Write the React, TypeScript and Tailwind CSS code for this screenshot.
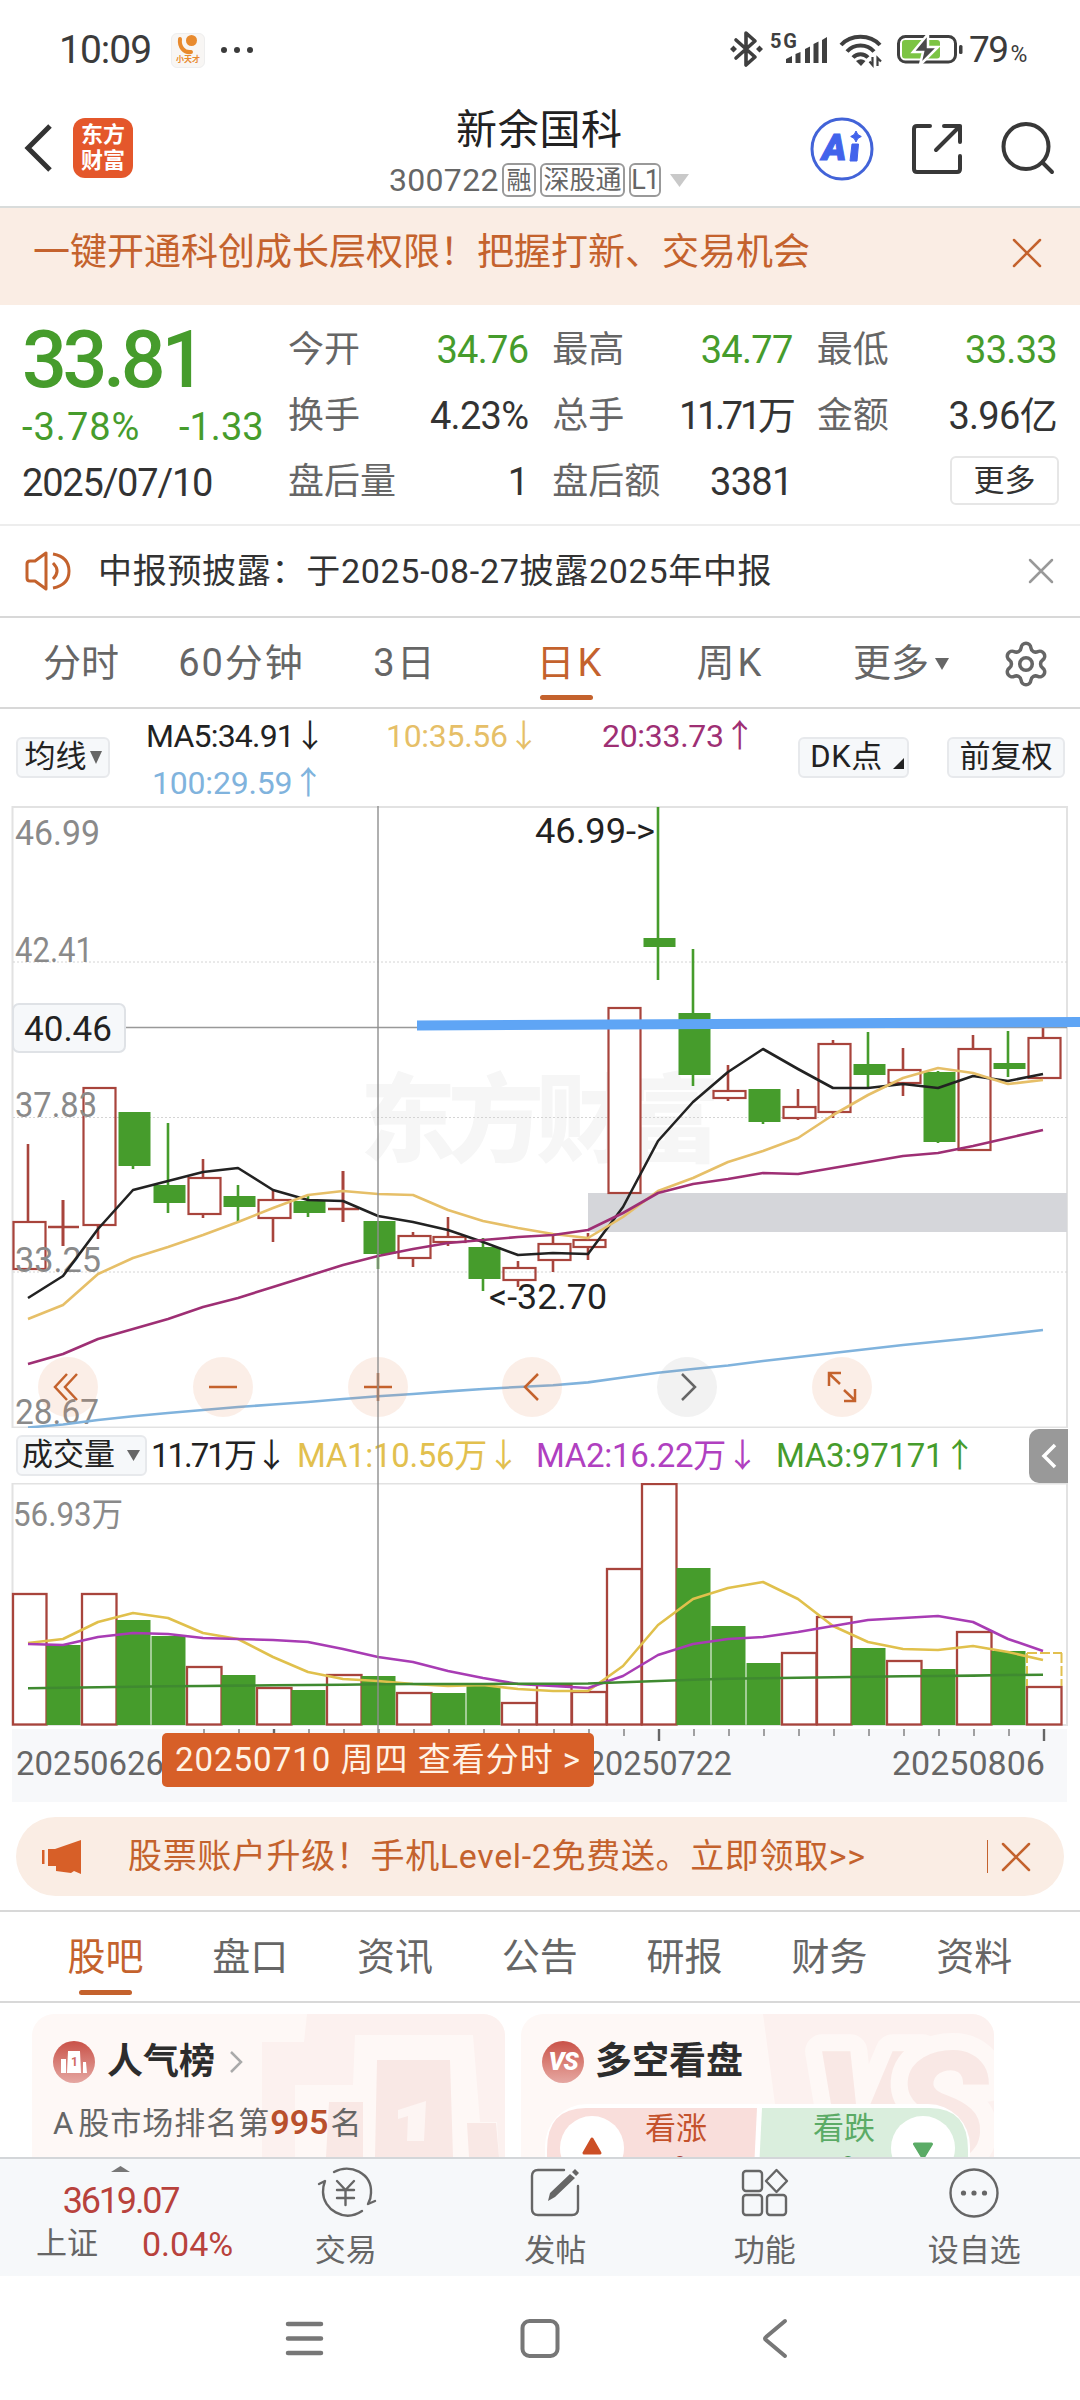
import { Settings } from "lucide-react";
import clsx from "clsx";

const RED = "#a8443c";
const GREEN = "#469c2c";

type Candle = { up: boolean; high: number; top: number; bottom: number; low: number; volume: number };

const c = (up: boolean, high: number, top: number, bottom: number, low: number, volume: number): Candle => ({
  up, high, top, bottom, low, volume,
});

// Chart space: y grows downward, one candle every 35 units starting at x = 28
const candles: Candle[] = [
  c(true, 1144, 1222, 1269, 1269, 1594),
  c(true, 1200, 1227, 1227, 1246, 0),
  c(true, 1087, 1088, 1225, 1239, 1594),
  c(false, 1112, 1112, 1166, 1169, 1620),
  c(false, 1123, 1185, 1203, 1213, 1636),
  c(true, 1159, 1178, 1214, 1218, 1667),
  c(false, 1185, 1196, 1207, 1222, 1675),
  c(true, 1189, 1200, 1218, 1242, 1688),
  c(false, 1195, 1201, 1213, 1217, 1690),
  c(true, 1171, 1209, 1209, 1222, 1675),
  c(false, 1221, 1221, 1254, 1269, 1676),
  c(true, 1232, 1236, 1258, 1267, 1693),
  c(true, 1217, 1237, 1242, 1246, 0),
  c(false, 1238, 1247, 1279, 1291, 1686),
  c(true, 1261, 1268, 1280, 1287, 1703),
  c(true, 1235, 1244, 1260, 1272, 1685),
  c(true, 1233, 1240, 1247, 1260, 1692),
  c(true, 1008, 1008, 1193, 1193, 1569),
  c(false, 807, 938, 947, 980, 0),
  c(false, 949, 1013, 1075, 1086, 1568),
  c(true, 1065, 1091, 1098, 1101, 0),
  c(false, 1089, 1089, 1122, 1124, 1663),
  c(true, 1089, 1107, 1118, 1120, 1653),
  c(true, 1040, 1044, 1112, 1118, 1617),
  c(false, 1032, 1064, 1075, 1088, 1648),
  c(true, 1048, 1070, 1083, 1096, 1661),
  c(false, 1071, 1072, 1142, 1143, 1669),
  c(true, 1035, 1049, 1150, 1150, 1632),
  c(false, 1031, 1063, 1069, 1077, 1651),
  c(true, 1027, 1038, 1078, 1078, 1687),
];

// Days whose volume colour differs from the candle colour
const volumeOverride: Record<number, { up: boolean; y: number }> = {
  1: { up: false, y: 1645 },
  12: { up: false, y: 1693 },
  18: { up: true, y: 1484 },
  20: { up: false, y: 1626 },
};

const ma5 = [1298, 1276, 1229, 1190, 1181, 1172, 1168, 1190, 1200, 1201, 1216, 1222, 1230, 1242, 1255, 1253, 1254, 1207, 1141, 1102, 1072, 1049, 1069, 1088, 1088, 1084, 1088, 1076, 1081, 1074];
const ma10 = [1319, 1305, 1274, 1258, 1247, 1235, 1222, 1208, 1195, 1191, 1194, 1195, 1210, 1221, 1228, 1234, 1238, 1217, 1191, 1178, 1162, 1151, 1138, 1115, 1095, 1078, 1068, 1073, 1084, 1080];
const ma20 = [1364, 1354, 1339, 1329, 1319, 1307, 1298, 1287, 1276, 1265, 1256, 1249, 1243, 1240, 1237, 1235, 1230, 1213, 1193, 1184, 1179, 1173, 1174, 1168, 1162, 1156, 1153, 1146, 1138, 1130];
const ma100 = [1427.5, 1424.5, 1420, 1416.3, 1413, 1410, 1407, 1404.5, 1402, 1399, 1396.3, 1394, 1391.4, 1389, 1387, 1385.3, 1382.4, 1377.5, 1372.7, 1369, 1365.5, 1361, 1357, 1353, 1349, 1345, 1341.5, 1338, 1334, 1330];
const vol5 = [1643, 1639, 1622, 1613, 1618, 1633, 1639, 1657, 1672, 1679, 1681, 1684, 1686, 1685, 1689, 1691, 1691, 1666, 1625, 1599, 1588, 1582, 1599, 1626, 1642, 1649, 1650, 1646, 1652, 1660];
const vol10 = [1644, 1645, 1637, 1633, 1634, 1638, 1639, 1640, 1642, 1649, 1657, 1662, 1671, 1678, 1684, 1686, 1688, 1676, 1655, 1644, 1639, 1637, 1632, 1626, 1620, 1618, 1616, 1622, 1639, 1651];
const vol100 = [1688.3, 1687.8, 1687.2, 1686.7, 1686.3, 1686, 1685.6, 1685.3, 1685, 1684.7, 1684.3, 1684, 1684, 1684, 1683.7, 1683.7, 1683.5, 1682.2, 1681, 1679.8, 1678.7, 1678.2, 1677.7, 1677.2, 1676.7, 1676.3, 1676, 1675.6, 1675, 1674.7];

const xAt = (i: number) => 28 + i * 35;
const line = (ys: number[]) => ys.map((y, i) => `${xAt(i)},${y}`).join(" ");

function CloseIcon({ size, color, stroke = 2.5 }: { size: number; color: string; stroke?: number }) {
  return (
    <svg width={size} height={size} viewBox={`0 0 ${size} ${size}`} fill="none" stroke={color} strokeWidth={stroke} strokeLinecap="round">
      <path d={`M2 2L${size - 2} ${size - 2}M${size - 2} 2L2 ${size - 2}`} />
    </svg>
  );
}

function Caret({ w, h, color }: { w: number; h: number; color: string }) {
  return (
    <svg width={w} height={h} viewBox="0 0 10 10" preserveAspectRatio="none" className="shrink-0">
      <path d="M0 0H10L5 10Z" fill={color} />
    </svg>
  );
}

function StatusBar() {
  return (
    <div className="flex h-[100px] items-center pl-[59px] text-[#3b3b3b]">
      <span className="w-[112px] text-[39px] tracking-[-1px]">10:09</span>
      <div className="flex h-[35px] w-[34px] flex-col items-center rounded-[6px] border border-[#eee] bg-[#f8f6f4]">
        <svg width="24" height="21" viewBox="0 0 24 21">
          <circle cx="15.500" cy="6.500" r="5.500" fill="#e88a2e" />
          <path d="M4 5C3 13 8 19 15 18" fill="none" stroke="#e88a2e" strokeWidth="4" strokeLinecap="round" />
        </svg>
        <span className="text-[8px] leading-[10px] font-bold text-[#e88a2e]">小天才</span>
      </div>
      <div className="ml-[16px] flex gap-[7px]">
        <i className="h-[6px] w-[6px] rounded-full bg-[#3b3b3b]" />
        <i className="h-[6px] w-[6px] rounded-full bg-[#3b3b3b]" />
        <i className="h-[6px] w-[6px] rounded-full bg-[#3b3b3b]" />
      </div>
      <svg className="ml-[477px]" width="236" height="40" viewBox="730 30 236 40">
        <g fill="none" stroke="#3f3f3f" strokeWidth="3.600" strokeLinejoin="round" strokeLinecap="round">
          <path d="M736 40L755 57L746 65V33L755 41L736 58" />
        </g>
        <path d="M730 49l3.500-3.500 3.500 3.500-3.500 3.500zM756 49l3.500-3.500 3.500 3.500-3.500 3.500z" fill="#3f3f3f" />
        <text x="770" y="48" fontSize="20" fontWeight="700" fill="#3f3f3f" textLength="27">5G</text>
        <path d="M786 63v-4l6-3v7zM795.500 63v-9l5-2v11zM805 63v-14l5-2.500v16.500zM813.500 63v-19l5-2.500v21.500zM822 63v-23l5-3v26z" fill="#3f3f3f" />
        <g fill="none" stroke="#3f3f3f" strokeWidth="4">
          <path d="M841 45C851 34 870 34 880 45" />
          <path d="M847 51.500C854 43.500 867 43.500 874 51.500" />
          <path d="M853 57.500C857 53 864 53 868 57.500" />
        </g>
        <path d="M856 61Q861 57.500 865.500 61L861 66Z" fill="#3f3f3f" />
        <path d="M872.500 57v8l-3-3.500M877.500 66v-8l3.500 3.500" fill="none" stroke="#3f3f3f" strokeWidth="2.200" />
        <rect x="898.500" y="36.500" width="57" height="25.500" rx="7" fill="#fff" stroke="#3f3f3f" strokeWidth="3" />
        <rect x="902" y="40" width="38" height="18.500" rx="3" fill="#7cc444" />
        <rect x="959" y="45" width="3.500" height="9" rx="1.500" fill="#3f3f3f" />
        <path d="M928 34L913 52H923L920 65L938 47H928Z" fill="#4a4a4a" stroke="#fff" strokeWidth="2.500" />
      </svg>
      <span className="ml-[3px] text-[37px] tracking-[-1.500px]">79</span>
      <span className="mt-[10px] ml-[3px] text-[23px]">%</span>
    </div>
  );
}

function Header() {
  const tag = "flex h-[34px] shrink-0 items-center justify-center rounded-[6px] border-2 border-[#999] leading-none whitespace-nowrap";
  return (
    <header className="flex h-[108px] items-center border-b-2 border-[#d9dcdb] px-[24px]">
      <svg width="30" height="48" viewBox="0 0 30 48" fill="none" stroke="#333" strokeWidth="5" className="mt-[-10px]">
        <path d="M26 2L4 24L26 46" />
      </svg>
      <div className="-mt-[10px] ml-[19px] flex h-[60px] w-[60px] flex-col items-center justify-center rounded-[12px] bg-[#e4572b] text-[22px] leading-[26px] font-bold text-white">
        <span>东方</span>
        <span>财富</span>
      </div>
      <div className="ml-[256px] w-[301px]">
        <h1 className="pl-[67px] text-[41px] leading-[54px] tracking-[0.700px] text-[#222]">新余国科</h1>
        <div className="flex h-[46px] items-center text-[28px] text-[#666]">
          <span className="w-[113px] text-[32px] tracking-[0.300px]">300722</span>
          <span className={clsx(tag, "w-[34px] text-[25px]")}>融</span>
          <span className={clsx(tag, "ml-[4px] w-[85px] text-[26px]")}>深股通</span>
          <span className={clsx(tag, "ml-[4px] w-[32px] text-[27px] tracking-[-1px]")}>L1</span>
          <span className="ml-[9px]"><Caret w={19} h={13} color="#c9c9c9" /></span>
        </div>
      </div>
      <svg width="246" height="66" viewBox="809 115 246 66" className="-mt-[10px] ml-[119px]" fill="none">
        <circle cx="842" cy="149" r="30" stroke="#4263d8" strokeWidth="3" />
        <text x="822" y="160" fontSize="37" fontWeight="900" fontStyle="italic" fill="#4263eb" stroke="#4263eb" strokeWidth="1">A</text>
        <path d="M852 144h6.500l-1.500 17h-7zM856 131l1.800 3.500 3.500 2-3.500 2-1.800 3.500-1.800-3.500-3.500-2 3.500-2z" fill="#4263eb" stroke="#4263eb" />
        <g stroke="#383838" strokeWidth="4" strokeLinecap="round" strokeLinejoin="round">
          <path d="M930 126H917Q914 126 914 129V169Q914 172 917 172H957Q960 172 960 169V156" />
          <path d="M944 126H960V142M960 126L936 150" />
          <circle cx="1026" cy="146.500" r="22.500" />
          <path d="M1043 163L1052 172" />
        </g>
      </svg>
    </header>
  );
}

const quotes = [
  { label: "今开", value: "34.76", down: true },
  { label: "最高", value: "34.77", down: true },
  { label: "最低", value: "33.33", down: true },
  { label: "换手", value: "4.23%" },
  { label: "总手", value: "11.71万", tight: true },
  { label: "金额", value: "3.96亿" },
  { label: "盘后量", value: "1" },
  { label: "盘后额", value: "3381" },
];

function QuotePanel() {
  return (
    <section className="flex h-[221px] border-b-2 border-[#ededed] pt-[12px] text-[38px] text-[#333]">
      <div className="w-[288px] pl-[22px]">
        <div className="h-[84px] text-[79px] leading-[86px] font-medium tracking-[-4.300px] text-[#469c2c]">33.81</div>
        <div className="flex h-[52px] items-center gap-[35px] text-[#469c2c]">
          <span className="w-[122px] tracking-[1px]">-3.78%</span>
          <span>-1.33</span>
        </div>
        <div className="flex h-[60px] items-center tracking-[-1.200px]">2025/07/10</div>
      </div>
      <div className="grid h-[198px] w-[769px] grid-cols-3 grid-rows-3 gap-x-[24px]">
        {quotes.map((q) => (
          <div key={q.label} className="flex items-center justify-between">
            <span className="text-[36px] text-[#666]">{q.label}</span>
            <span className={clsx(q.tight ? "tracking-[-3.300px]" : "tracking-[-0.700px]", q.down && "text-[#469c2c]")}>{q.value}</span>
          </div>
        ))}
        <button className="-mr-[2px] mt-[7px] ml-auto h-[49px] w-[109px] rounded-[6px] border-2 border-[#e6e6e6] text-[31px] leading-none">更多</button>
      </div>
    </section>
  );
}

function Notice() {
  return (
    <section className="flex h-[92px] items-center border-b-2 border-[#d8d8d8] pr-[26px] pl-[25px]">
      <svg width="46" height="40" viewBox="0 0 46 40" fill="none" stroke="#c4622d" strokeWidth="3" strokeLinejoin="round">
        <path d="M21 2V38L10 30H5Q2 30 2 27V13Q2 10 5 10H10Z" />
        <path d="M28 12Q36 20 28 28M28 3Q44 6 44 20Q44 34 28 37" />
      </svg>
      <span className="ml-[27px] text-[34px] tracking-[0.700px] text-[#333]">中报预披露：于2025-08-27披露2025年中报</span>
      <span className="ml-auto"><CloseIcon size={26} color="#999" /></span>
    </section>
  );
}

function PeriodTabs() {
  return (
    <nav className="flex h-[91px] items-center border-b-2 border-[#d8d8d8] pt-[2px] text-[38px] text-[#666]">
      <span className="w-[162px] text-center">分时</span>
      <span className="w-[159px] text-center tracking-[2px]">60分钟</span>
      <span className="w-[168px] text-center tracking-[2px]">3日</span>
      <span className="relative w-[163px] text-center tracking-[3px] text-[#c4622d]">
        日K
        <i className="absolute top-[60px] left-[51px] h-[5px] w-[53px] rounded-full bg-[#c4622d]" />
      </span>
      <span className="w-[157px] text-center tracking-[3px]">周K</span>
      <span className="ml-[44px]">更多</span>
      <span className="ml-[6px]"><Caret w={14} h={12} color="#666" /></span>
      <Settings className="ml-[52px]" size={50} strokeWidth={1.7} color="#666" />
    </nav>
  );
}

function IndicatorRow() {
  const button = "flex h-[41px] items-center justify-center rounded-[6px] border-2 border-[#e7e9ec] bg-[#f6f8fa] text-[31px] text-[#222]";
  return (
    <div className="flex h-[97px] pl-[16px] text-[32px]">
      <button className={clsx(button, "mt-[28px] w-[94px] gap-[3px]")}>
        均线
        <Caret w={12} h={13} color="#666" />
      </button>
      <div className="ml-[36px] grid h-[97px] w-[640px] grid-cols-[240px_216px_1fr] grid-rows-[47px_47px] items-center pt-[3px]">
        <span className="tracking-[-0.800px] text-[#222]">MA5:34.91↓</span>
        <span className="tracking-[-0.300px] text-[#e6bf68]">10:35.56↓</span>
        <span className="tracking-[-0.300px] text-[#9e2f74]">20:33.73↑</span>
        <span className="pl-[6px] tracking-[-0.200px] text-[#80b3dd]">100:29.59↑</span>
      </div>
      <button className={clsx(button, "relative mt-[28px] ml-[12px] w-[111px] pr-[14px] tracking-[0.500px]")}>
        DK点
        <svg className="absolute right-[3px] bottom-[7px]" width="11" height="11"><path d="M11 0V11H0Z" fill="#222" /></svg>
      </button>
      <button className={clsx(button, "mt-[28px] ml-[38px] w-[118px]")}>前复权</button>
    </div>
  );
}

function PriceChart() {
  const labels = [
    { text: "46.99", y: 845, w: 85 },
    { text: "42.41", y: 962, w: 78 },
    { text: "37.83", y: 1117, w: 82 },
    { text: "33.25", y: 1272, w: 86 },
    { text: "28.67", y: 1424, w: 84 },
  ];
  return (
    <svg className="block" width="1080" height="622" viewBox="0 806 1080 622" fill="none">
      <text x="360" y="1154" fontSize="96" fontWeight="900" fill="#f6f6f6" textLength="360">东方财富</text>
      <rect x="12.500" y="807" width="1054.500" height="620.500" stroke="#e2e2e2" strokeWidth="2" />
      {[962, 1117.5, 1272].map((y) => (
        <path key={y} d={`M13 ${y}H1067`} stroke="#d4d4d4" strokeDasharray="2 2" />
      ))}
      <rect x="588" y="1193" width="479" height="39" fill="#d5d6da" />
      {candles.map((k, i) => {
        const x = xAt(i);
        const color = k.up ? RED : GREEN;
        const flat = k.top === k.bottom;
        return (
          <g key={i} stroke={color} strokeWidth="2.200">
            <path d={`M${x} ${k.high}V${k.top}M${x} ${k.bottom}V${k.low}`} strokeWidth="2.600" />
            {flat && <path d={`M${x - 15} ${k.top}H${x + 16}M${x} ${k.high}V${k.low}`} strokeWidth="2.600" />}
            {!flat && k.up && <rect x={x - 14.5} y={k.top} width="32" height={k.bottom - k.top} fill={i === 17 ? "#fff" : "none"} />}
            {!flat && !k.up && <rect x={x - 14} y={k.top + 0.5} width="31" height={k.bottom - k.top - 1} fill={GREEN} strokeWidth="1" />}
          </g>
        );
      })}
      {labels.map((l) => (
        <text key={l.text} x="15" y={l.y} fontSize="35" fill="#8a8a8a" textLength={l.w} lengthAdjust="spacingAndGlyphs">{l.text}</text>
      ))}
      <g strokeWidth="2.600" strokeLinejoin="round">
        <polyline points={line(ma100)} stroke="#80b3dd" />
        <polyline points={line(ma5)} stroke="#222" />
        <polyline points={line(ma10)} stroke="#e6bf68" />
        <polyline points={line(ma20)} stroke="#9e2f74" />
      </g>
      <text x="535" y="843" fontSize="35" fill="#222" textLength="120" lengthAdjust="spacingAndGlyphs">46.99-&gt;</text>
      <text x="489" y="1309" fontSize="35" fill="#222" textLength="118" lengthAdjust="spacingAndGlyphs">&lt;-32.70</text>
      <path d="M126 1027.500H1067" stroke="#999" strokeWidth="1.500" />
      <path d="M417 1025.500L1080 1022" stroke="#5fa5f5" strokeWidth="10" />
      <rect x="13" y="1004" width="112" height="48" rx="6" fill="#f6f8fa" stroke="#dfe2e6" strokeWidth="2" />
      <text x="24" y="1041" fontSize="35" fill="#222" textLength="88" lengthAdjust="spacingAndGlyphs">40.46</text>
      {[68, 223, 378, 532, 687, 842].map((x) => (
        <circle key={x} cx={x} cy="1387" r="30" fill={x === 687 ? "#999" : "#e58a57"} fillOpacity={x === 687 ? 0.13 : 0.14} />
      ))}
      <g stroke="#c4622d" strokeWidth="2.500">
        <path d="M67 1374L55 1387L67 1400M77 1374L65 1387L77 1400" />
        <path d="M209 1387H237M364 1387H392M378 1373V1401" />
        <path d="M538 1374L525 1387L538 1400" />
        <path d="M841 1373H829V1386M829 1373.500L840 1384M844 1401H855V1389M855 1400.500L844 1390" />
      </g>
      <path d="M682 1374L695 1387L682 1400" stroke="#666" strokeWidth="2.500" />
    </svg>
  );
}

function VolumeHeader() {
  return (
    <div className="flex h-[55px] items-center pl-[16px] text-[33px] whitespace-nowrap">
      <button className="flex h-[41px] w-[131px] items-center gap-[12px] rounded-[6px] border-2 border-[#e7e9ec] bg-[#f6f8fa] pl-[4px] text-[31px] text-[#222]">
        成交量
        <Caret w={13} h={11} color="#666" />
      </button>
      <span className="ml-[4px] w-[146px] tracking-[-2px] text-[#222]">11.71万↓</span>
      <span className="w-[239px] tracking-[-0.300px] text-[#e2c04e]">MA1:10.56万↓</span>
      <span className="w-[240px] tracking-[-0.300px] text-[#b040c0]">MA2:16.22万↓</span>
      <span className="tracking-[-0.300px] text-[#469c2c]">MA3:97171↑</span>
      <button className="mr-[12px] ml-auto flex h-[54px] w-[39px] items-center justify-center rounded-l-[10px] bg-[#999]">
        <svg width="16" height="26" viewBox="0 0 16 26" fill="none" stroke="#fff" strokeWidth="3.500"><path d="M14 2L3 13L14 24" /></svg>
      </button>
    </div>
  );
}

function VolumeChart() {
  return (
    <svg className="block" width="1080" height="319" viewBox="0 1483 1080 319" fill="none">
      <rect x="12.500" y="1483.500" width="1054.500" height="241.500" stroke="#e2e2e2" strokeWidth="2" />
      <text x="13" y="1526" fontSize="33" fill="#8a8a8a" textLength="110" lengthAdjust="spacingAndGlyphs">56.93万</text>
      {candles.map((k, i) => {
        const up = volumeOverride[i]?.up ?? k.up;
        const y = volumeOverride[i]?.y ?? k.volume;
        const left = i === 0 ? 12 : xAt(i) - 17;
        const width = xAt(i) + 18 - left;
        return up ? (
          <rect key={i} x={left + 1} y={y} width={width - 0.5} height={1724.5 - y} stroke={RED} strokeWidth="2.300" />
        ) : (
          <rect key={i} x={left + 0.5} y={y} width={width - 1} height={1725 - y} fill={GREEN} />
        );
      })}
      <path d="M1027 1653H1062" stroke="#e2c04e" strokeWidth="2" strokeDasharray="10 3" />
      <path d="M1027 1653V1686M1061.500 1653V1686" stroke="#e2c04e" strokeWidth="2" strokeDasharray="10 3" />
      <g strokeWidth="2.600" strokeLinejoin="round">
        <polyline points={line(vol5)} stroke="#e0c04c" />
        <polyline points={line(vol10)} stroke="#a83cb4" />
        <polyline points={line(vol100)} stroke="#3f8a30" />
      </g>
      <rect x="12" y="1729" width="1055" height="73" fill="#f7f8fa" />
      {candles.map((_, i) => {
        if (i < 5) return null;
        const big = i === 7 || i === 18 || i === 29;
        return <path key={i} d={`M${xAt(i) + 1} 1729V${big && i > 7 ? 1741 : 1736}`} stroke="#666" strokeWidth={big ? 2.4 : 1.2} />;
      })}
      <g fontSize="34" fill="#666">
        <text x="16" y="1775" textLength="148" lengthAdjust="spacingAndGlyphs">20250626</text>
        <text x="587" y="1775" textLength="145" lengthAdjust="spacingAndGlyphs">20250722</text>
        <text x="892" y="1775" textLength="153" lengthAdjust="spacingAndGlyphs">20250806</text>
      </g>
    </svg>
  );
}

function Charts() {
  return (
    <section className="relative">
      <PriceChart />
      <VolumeHeader />
      <VolumeChart />
      <i className="absolute top-0 left-[377px] h-[936px] w-[1.500px] bg-[#8e8e8e]/70" />
      <button className="absolute top-[927px] left-[162px] flex h-[54px] w-[432px] items-center justify-center rounded-[5px] bg-[#d75f28] text-[33px] tracking-[1px] whitespace-pre text-[#fff3e6]">
        20250710 周四 查看分时 &gt;
      </button>
    </section>
  );
}

function Promo() {
  return (
    <section className="mx-[16px] mt-[15px] flex h-[79px] items-center rounded-full bg-[#faede4] pr-[33px] pl-[25px] text-[#c4622d]">
      <svg width="42" height="36" viewBox="0 0 42 36" fill="#d75f28">
        <path d="M1 11h2.500v14H1zM7 10H14L40 1V35L33 32L30 34L15 32V27H7Z" />
      </svg>
      <span className="ml-[45px] text-[34px] tracking-[0.650px] whitespace-nowrap">股票账户升级！手机Level-2免费送。立即领取&gt;&gt;</span>
      <i className="ml-auto h-[33px] w-[1.500px] bg-[#c4622d]" />
      <span className="ml-[13px]"><CloseIcon size={30} color="#c4622d" /></span>
    </section>
  );
}

function SectionTabs() {
  const tabs = ["股吧", "盘口", "资讯", "公告", "研报", "财务", "资料"];
  return (
    <nav className="mt-[14px] flex h-[93px] items-center border-t-2 border-b-2 border-[#d8d8d8] pt-[2px] pl-[33px] text-[38px] text-[#666]">
      {tabs.map((tab, i) => (
        <span key={tab} className={clsx("relative w-[144.800px] text-center", i === 0 && "text-[#c4622d]")}>
          {tab}
          {i === 0 && <i className="absolute top-[61px] left-[46px] h-[5px] w-[53px] rounded-full bg-[#c4622d]" />}
        </span>
      ))}
    </nav>
  );
}

function PopularityCard() {
  return (
    <article className="relative h-[200px] w-[473px] overflow-hidden rounded-[22px] bg-[#fef8f6]">
      <svg className="absolute inset-0" width="473" height="143" viewBox="32 2014 473 143">
        <path d="M307 2014H505V2157H499L497 2122H480L473 2035H355L353 2085H295V2157H262V2042H304Z" fill="#fcf1ef" />
        <path d="M377 2060H450L453 2157H375ZM329 2102H363V2157H326ZM467 2123H496L499 2157H469Z" fill="#f9e8e5" />
        <path d="M398 2110L426 2101L424 2141H407L408 2116L398 2119Z" fill="#fdf5f3" />
      </svg>
      <div className="relative flex h-[96px] items-center pl-[21px]">
        <svg width="42" height="42" viewBox="0 0 42 42">
          <defs>
            <linearGradient id="badge" x2="0" y2="1"><stop stopColor="#c95248" /><stop offset="1" stopColor="#e5a7a2" /></linearGradient>
          </defs>
          <circle cx="21" cy="21" r="21" fill="url(#badge)" />
          <path d="M8 18H13V32H8ZM15 10H27L28 32H14ZM30 21H33L34 32H30Z" fill="#fff" />
          <text x="18" y="25" fontSize="12" fontWeight="700" fill="#d06a62">1</text>
        </svg>
        <h3 className="ml-[12px] text-[36px] font-bold text-[#2d2d2d]">人气榜</h3>
        <svg className="ml-[14px]" width="14" height="22" viewBox="0 0 14 22" fill="none" stroke="#aaa" strokeWidth="2.500"><path d="M2 1L12 11L2 21" /></svg>
      </div>
      <p className="relative -mt-[10px] pl-[21px] text-[31px] leading-[44px] text-[#666]">
        A<span className="ml-[5px] tracking-[1px]">股市场排名第</span>
        <b className="text-[34px] font-semibold text-[#b9502c]">995</b><span className="ml-[2px]">名</span>
      </p>
    </article>
  );
}

function SentimentCard() {
  return (
    <article className="relative h-[200px] w-[473px] overflow-hidden rounded-[22px] bg-[#fef8f6]">
      <svg className="absolute inset-0" width="473" height="200" viewBox="521 2014 473 200">
        <path d="M763 2014H994V2157H782Z" fill="#fcf1ef" />
        <g fontSize="155" fontWeight="900" fontStyle="italic" fill="#f9e8e5" stroke="#fef8f6" strokeWidth="34" strokeLinejoin="round" paintOrder="stroke">
          <text x="812" y="2162" textLength="176">VS</text>
        </g>
        <rect x="545" y="2104" width="425" height="91" rx="42" fill="#fff" />
        <path d="M757 2108H586Q547 2108 547 2150V2190H753Z" fill="#f9dedb" />
        <path d="M762 2108H930Q968 2108 968 2150V2190H758Z" fill="#daeedd" />
        <circle cx="592" cy="2148" r="32" fill="#fff" />
        <circle cx="923" cy="2148" r="32" fill="#fff" />
        <path d="M592 2139L600 2153H584Z" fill="#cc4f26" stroke="#cc4f26" strokeWidth="3" strokeLinejoin="round" />
        <path d="M923 2158L914.500 2144H931.500Z" fill="#5bab66" stroke="#5bab66" strokeWidth="3" strokeLinejoin="round" />
        <text x="645" y="2139" fontSize="31" fill="#c4522c">看涨</text>
        <text x="813" y="2139" fontSize="31" fill="#5bab66">看跌</text>
        <text x="674" y="2177" fontSize="30" fill="#a8443c">%</text>
        <text x="842" y="2177" fontSize="30" fill="#4f9a59">%</text>
      </svg>
      <div className="relative flex h-[96px] items-center pl-[21px]">
        <span className="flex h-[42px] w-[42px] items-center justify-center rounded-full bg-gradient-to-b from-[#c95248] to-[#e5a7a2] text-[25px] font-black tracking-[-1px] text-white italic">VS</span>
        <h3 className="ml-[11px] text-[37px] font-bold text-[#2d2d2d]">多空看盘</h3>
      </div>
    </article>
  );
}

function BottomBar() {
  const stroke = { fill: "none", stroke: "#666", strokeWidth: 2.4, strokeLinecap: "round", strokeLinejoin: "round" } as const;
  const items = [
    {
      label: "交易",
      icon: (
        <g {...stroke}>
          <path d="M14 6C30 -3 52 7 51 27Q51 33 48 38L55 35M42 45C24 57 3 43 3 26Q3 20 5 15L-1 18" transform="translate(3 -1)" />
          <path d="M20 14L28.500 23L37 14M20 23H37M20 31H37M28.500 23V38" />
        </g>
      ),
    },
    {
      label: "发帖",
      icon: (
        <g>
          <path {...stroke} d="M38 3H12Q6 3 6 9V42Q6 48 12 48H46Q52 48 52 42V19" />
          <path d="M22 34L24 26L44 7L49 11L29 30ZM46 5L49 2L53 6L50 9Z" fill="#666" />
        </g>
      ),
    },
    {
      label: "功能",
      icon: (
        <g {...stroke}>
          <rect x="7" y="4" width="19" height="20" rx="3" />
          <rect x="7" y="28" width="19" height="20" rx="3" />
          <rect x="31" y="28" width="19" height="20" rx="3" />
          <path d="M40.500 3L51 14L40.500 25L30 14Z" />
        </g>
      ),
    },
    {
      label: "设自选",
      icon: (
        <g>
          <circle {...stroke} cx="29" cy="26" r="23.500" />
          <circle cx="18.500" cy="26" r="2.600" fill="#666" />
          <circle cx="29" cy="26" r="2.600" fill="#666" />
          <circle cx="39.500" cy="26" r="2.600" fill="#666" />
        </g>
      ),
    },
  ];
  return (
    <footer className="flex h-[119px] shrink-0 border-t-2 border-[#d3d6d9] bg-[#f6f8fa]">
      <div className="flex w-[241px] flex-col items-center">
        <svg className="mt-[7px]" width="19" height="6" viewBox="0 0 19 6"><path d="M9.500 0L19 6H0Z" fill="#777" /></svg>
        <span className="mt-[7px] text-[36px] leading-[44px] tracking-[-2.200px] text-[#b8423c]">3619.07</span>
        <div className="flex w-full items-center pl-[36px] text-[31px] leading-[42px] text-[#666]">
          上证
          <span className="ml-[44px] text-[34px] text-[#b8423c]">0.04%</span>
        </div>
      </div>
      {items.map((item) => (
        <div key={item.label} className="flex w-[209.500px] flex-col items-center pt-[8px]">
          <svg width="58" height="52" viewBox="0 0 58 52" className="overflow-visible">{item.icon}</svg>
          <span className="mt-[11px] text-[31px] leading-[42px] text-[#666]">{item.label}</span>
        </div>
      ))}
    </footer>
  );
}

function SystemNav() {
  return (
    <div className="flex h-[124px] items-center bg-white">
      <svg width="1080" height="60" viewBox="0 2308 1080 60" fill="none" stroke="#777" strokeWidth="4" strokeLinecap="round" strokeLinejoin="round">
        <path d="M288 2324H321M288 2338.500H321M288 2353H321" strokeWidth="4.500" />
        <rect x="522.500" y="2321" width="35" height="35" rx="7" />
        <path d="M785 2321L766 2337Q764 2338.500 766 2340L785 2356" />
      </svg>
    </div>
  );
}

export default function App() {
  return (
    <div className="flex h-[2400px] w-[1080px] flex-col overflow-hidden bg-white font-['Roboto','Noto_Sans_CJK_SC',sans-serif]">
      <main className="h-[2157px] shrink-0 overflow-hidden">
        <StatusBar />
        <Header />
        <div className="flex h-[97px] items-center bg-[#faede4] pr-[38px] pb-[8px] pl-[33px] text-[37px] text-[#c4622d]">
          <span>一键开通科创成长层权限！把握打新、交易机会</span>
          <span className="ml-auto"><CloseIcon size={30} color="#c4622d" /></span>
        </div>
        <QuotePanel />
        <Notice />
        <PeriodTabs />
        <IndicatorRow />
        <Charts />
        <Promo />
        <SectionTabs />
        <div className="flex gap-[16px] pt-[11px] pl-[32px]">
          <PopularityCard />
          <SentimentCard />
        </div>
      </main>
      <BottomBar />
      <SystemNav />
    </div>
  );
}
